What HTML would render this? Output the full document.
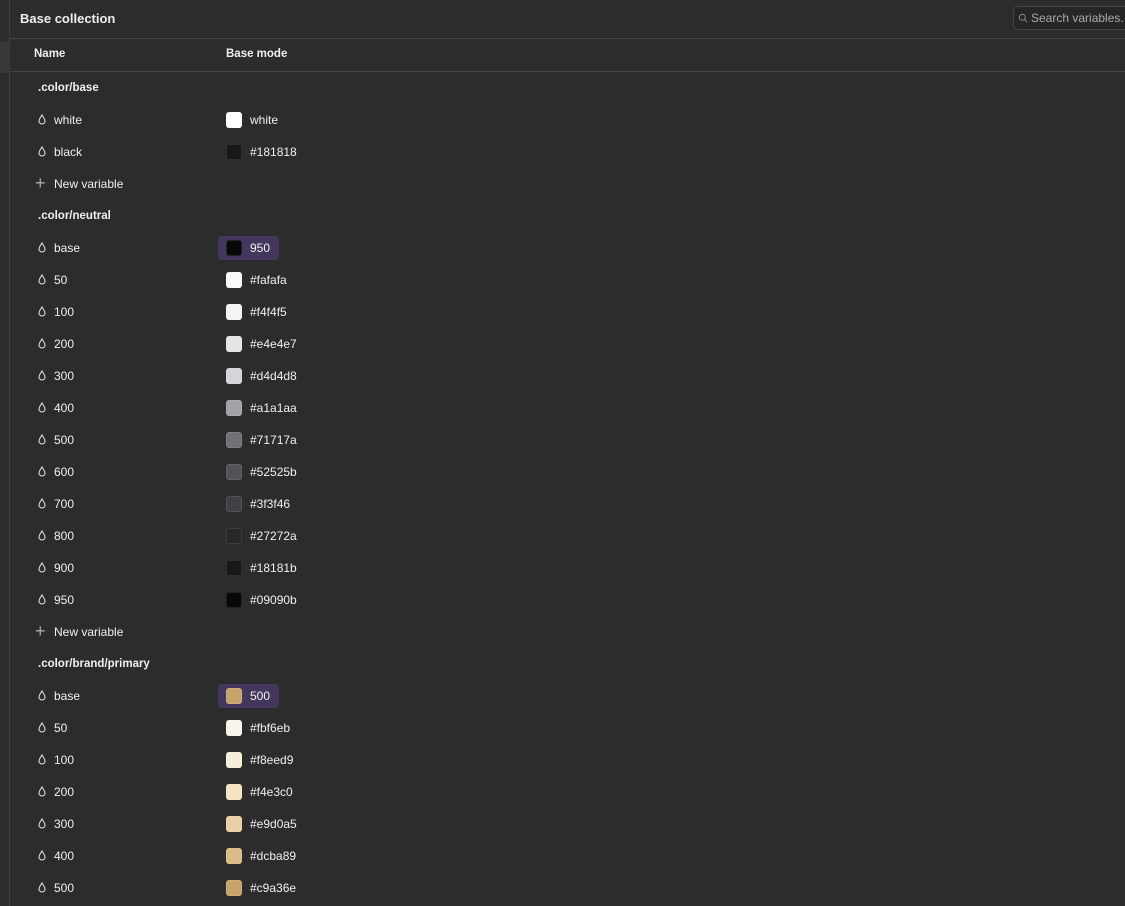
<!DOCTYPE html>
<html><head><style>
*{margin:0;padding:0;box-sizing:border-box}
body{width:1125px;height:906px;background:#2c2c2c;font-family:"Liberation Sans",sans-serif;color:#f0f0f0;position:relative;overflow:hidden;font-size:12px}
.abs{position:absolute;white-space:nowrap}
.row{position:absolute;left:10px;width:1115px;height:32px;white-space:nowrap}
.row .ic{position:absolute;left:28px;top:10px}
.row .nm{position:absolute;left:44px;top:9px;font-size:12px}
.row .grp{position:absolute;left:28px;top:10px;font-weight:bold;font-size:11.5px}
.sw{position:absolute;left:216px;top:8px;width:16px;height:16px;border-radius:3px;border:1px solid rgba(255,255,255,0.1)}
.val{position:absolute;left:240px;top:9px}
.pill{position:absolute;left:208px;top:4px;width:61px;height:24px;background:#43375e;border-radius:4px}
</style></head><body>
<div class="abs" style="left:9px;top:0;width:1px;height:906px;background:#3d3d3d"></div>
<div class="abs" style="left:0;top:42px;width:9px;height:31px;background:#383838"></div>
<div class="abs" style="left:20px;top:11px;font-weight:bold;font-size:13px">Base collection</div>
<div class="abs" style="left:1013px;top:6px;width:120px;height:24px;border:1px solid #444;border-radius:5px;background:#262626"></div>
<svg class="abs" style="left:1018px;top:13px" width="10" height="10" viewBox="0 0 10 10"><circle cx="4.3" cy="4.3" r="3" fill="none" stroke="#888" stroke-width="1"/><path d="M6.5 6.5L9 9" stroke="#888"/></svg>
<div class="abs" style="left:1031px;top:11px;color:#aaa;font-size:12px">Search variables...</div>
<div class="abs" style="left:10px;top:38px;width:1115px;height:1px;background:#444"></div>
<div class="abs" style="left:34px;top:48px;font-weight:bold;font-size:11.5px">Name</div>
<div class="abs" style="left:226px;top:48px;font-weight:bold;font-size:11.5px">Base mode</div>
<div class="abs" style="left:10px;top:71px;width:1115px;height:1px;background:#444"></div>
<div class="row" style="top:72px"><span class="grp">.color/base</span></div>
<div class="row" style="top:104px"><svg class="ic" width="8" height="11" viewBox="0 0 8 11"><path d="M4 1C3 3 1 5 1 7a3 3 0 0 0 6 0C7 5 5 3 4 1z" fill="none" stroke="#ddd" stroke-width="1.1"/></svg><span class="nm">white</span><span class="sw" style="background:#fff"></span><span class="val">white</span></div>
<div class="row" style="top:136px"><svg class="ic" width="8" height="11" viewBox="0 0 8 11"><path d="M4 1C3 3 1 5 1 7a3 3 0 0 0 6 0C7 5 5 3 4 1z" fill="none" stroke="#ddd" stroke-width="1.1"/></svg><span class="nm">black</span><span class="sw" style="background:#181818"></span><span class="val">#181818</span></div>
<div class="row" style="top:168px"><span style="position:absolute;left:25px;top:5px;font-size:18px;color:#aaa;font-weight:300">+</span><span class="nm">New variable</span></div>
<div class="row" style="top:200px"><span class="grp">.color/neutral</span></div>
<div class="row" style="top:232px"><svg class="ic" width="8" height="11" viewBox="0 0 8 11"><path d="M4 1C3 3 1 5 1 7a3 3 0 0 0 6 0C7 5 5 3 4 1z" fill="none" stroke="#ddd" stroke-width="1.1"/></svg><span class="nm">base</span><span class="pill"></span><span class="sw" style="background:#09090b"></span><span class="val">950</span></div>
<div class="row" style="top:264px"><svg class="ic" width="8" height="11" viewBox="0 0 8 11"><path d="M4 1C3 3 1 5 1 7a3 3 0 0 0 6 0C7 5 5 3 4 1z" fill="none" stroke="#ddd" stroke-width="1.1"/></svg><span class="nm">50</span><span class="sw" style="background:#fafafa"></span><span class="val">#fafafa</span></div>
<div class="row" style="top:296px"><svg class="ic" width="8" height="11" viewBox="0 0 8 11"><path d="M4 1C3 3 1 5 1 7a3 3 0 0 0 6 0C7 5 5 3 4 1z" fill="none" stroke="#ddd" stroke-width="1.1"/></svg><span class="nm">100</span><span class="sw" style="background:#f4f4f5"></span><span class="val">#f4f4f5</span></div>
<div class="row" style="top:328px"><svg class="ic" width="8" height="11" viewBox="0 0 8 11"><path d="M4 1C3 3 1 5 1 7a3 3 0 0 0 6 0C7 5 5 3 4 1z" fill="none" stroke="#ddd" stroke-width="1.1"/></svg><span class="nm">200</span><span class="sw" style="background:#e4e4e7"></span><span class="val">#e4e4e7</span></div>
<div class="row" style="top:360px"><svg class="ic" width="8" height="11" viewBox="0 0 8 11"><path d="M4 1C3 3 1 5 1 7a3 3 0 0 0 6 0C7 5 5 3 4 1z" fill="none" stroke="#ddd" stroke-width="1.1"/></svg><span class="nm">300</span><span class="sw" style="background:#d4d4d8"></span><span class="val">#d4d4d8</span></div>
<div class="row" style="top:392px"><svg class="ic" width="8" height="11" viewBox="0 0 8 11"><path d="M4 1C3 3 1 5 1 7a3 3 0 0 0 6 0C7 5 5 3 4 1z" fill="none" stroke="#ddd" stroke-width="1.1"/></svg><span class="nm">400</span><span class="sw" style="background:#a1a1aa"></span><span class="val">#a1a1aa</span></div>
<div class="row" style="top:424px"><svg class="ic" width="8" height="11" viewBox="0 0 8 11"><path d="M4 1C3 3 1 5 1 7a3 3 0 0 0 6 0C7 5 5 3 4 1z" fill="none" stroke="#ddd" stroke-width="1.1"/></svg><span class="nm">500</span><span class="sw" style="background:#71717a"></span><span class="val">#71717a</span></div>
<div class="row" style="top:456px"><svg class="ic" width="8" height="11" viewBox="0 0 8 11"><path d="M4 1C3 3 1 5 1 7a3 3 0 0 0 6 0C7 5 5 3 4 1z" fill="none" stroke="#ddd" stroke-width="1.1"/></svg><span class="nm">600</span><span class="sw" style="background:#52525b"></span><span class="val">#52525b</span></div>
<div class="row" style="top:488px"><svg class="ic" width="8" height="11" viewBox="0 0 8 11"><path d="M4 1C3 3 1 5 1 7a3 3 0 0 0 6 0C7 5 5 3 4 1z" fill="none" stroke="#ddd" stroke-width="1.1"/></svg><span class="nm">700</span><span class="sw" style="background:#3f3f46"></span><span class="val">#3f3f46</span></div>
<div class="row" style="top:520px"><svg class="ic" width="8" height="11" viewBox="0 0 8 11"><path d="M4 1C3 3 1 5 1 7a3 3 0 0 0 6 0C7 5 5 3 4 1z" fill="none" stroke="#ddd" stroke-width="1.1"/></svg><span class="nm">800</span><span class="sw" style="background:#27272a"></span><span class="val">#27272a</span></div>
<div class="row" style="top:552px"><svg class="ic" width="8" height="11" viewBox="0 0 8 11"><path d="M4 1C3 3 1 5 1 7a3 3 0 0 0 6 0C7 5 5 3 4 1z" fill="none" stroke="#ddd" stroke-width="1.1"/></svg><span class="nm">900</span><span class="sw" style="background:#18181b"></span><span class="val">#18181b</span></div>
<div class="row" style="top:584px"><svg class="ic" width="8" height="11" viewBox="0 0 8 11"><path d="M4 1C3 3 1 5 1 7a3 3 0 0 0 6 0C7 5 5 3 4 1z" fill="none" stroke="#ddd" stroke-width="1.1"/></svg><span class="nm">950</span><span class="sw" style="background:#09090b"></span><span class="val">#09090b</span></div>
<div class="row" style="top:616px"><span style="position:absolute;left:25px;top:5px;font-size:18px;color:#aaa;font-weight:300">+</span><span class="nm">New variable</span></div>
<div class="row" style="top:648px"><span class="grp">.color/brand/primary</span></div>
<div class="row" style="top:680px"><svg class="ic" width="8" height="11" viewBox="0 0 8 11"><path d="M4 1C3 3 1 5 1 7a3 3 0 0 0 6 0C7 5 5 3 4 1z" fill="none" stroke="#ddd" stroke-width="1.1"/></svg><span class="nm">base</span><span class="pill"></span><span class="sw" style="background:#c9a36e"></span><span class="val">500</span></div>
<div class="row" style="top:712px"><svg class="ic" width="8" height="11" viewBox="0 0 8 11"><path d="M4 1C3 3 1 5 1 7a3 3 0 0 0 6 0C7 5 5 3 4 1z" fill="none" stroke="#ddd" stroke-width="1.1"/></svg><span class="nm">50</span><span class="sw" style="background:#fbf6eb"></span><span class="val">#fbf6eb</span></div>
<div class="row" style="top:744px"><svg class="ic" width="8" height="11" viewBox="0 0 8 11"><path d="M4 1C3 3 1 5 1 7a3 3 0 0 0 6 0C7 5 5 3 4 1z" fill="none" stroke="#ddd" stroke-width="1.1"/></svg><span class="nm">100</span><span class="sw" style="background:#f8eed9"></span><span class="val">#f8eed9</span></div>
<div class="row" style="top:776px"><svg class="ic" width="8" height="11" viewBox="0 0 8 11"><path d="M4 1C3 3 1 5 1 7a3 3 0 0 0 6 0C7 5 5 3 4 1z" fill="none" stroke="#ddd" stroke-width="1.1"/></svg><span class="nm">200</span><span class="sw" style="background:#f4e3c0"></span><span class="val">#f4e3c0</span></div>
<div class="row" style="top:808px"><svg class="ic" width="8" height="11" viewBox="0 0 8 11"><path d="M4 1C3 3 1 5 1 7a3 3 0 0 0 6 0C7 5 5 3 4 1z" fill="none" stroke="#ddd" stroke-width="1.1"/></svg><span class="nm">300</span><span class="sw" style="background:#e9d0a5"></span><span class="val">#e9d0a5</span></div>
<div class="row" style="top:840px"><svg class="ic" width="8" height="11" viewBox="0 0 8 11"><path d="M4 1C3 3 1 5 1 7a3 3 0 0 0 6 0C7 5 5 3 4 1z" fill="none" stroke="#ddd" stroke-width="1.1"/></svg><span class="nm">400</span><span class="sw" style="background:#dcba89"></span><span class="val">#dcba89</span></div>
<div class="row" style="top:872px"><svg class="ic" width="8" height="11" viewBox="0 0 8 11"><path d="M4 1C3 3 1 5 1 7a3 3 0 0 0 6 0C7 5 5 3 4 1z" fill="none" stroke="#ddd" stroke-width="1.1"/></svg><span class="nm">500</span><span class="sw" style="background:#c9a36e"></span><span class="val">#c9a36e</span></div>
</body></html>
